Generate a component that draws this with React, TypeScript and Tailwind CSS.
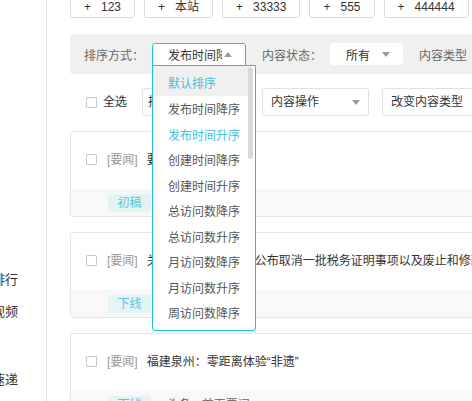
import React from "react";

const sortOptions = [
  "默认排序",
  "发布时间降序",
  "发布时间升序",
  "创建时间降序",
  "创建时间升序",
  "总访问数降序",
  "总访问数升序",
  "月访问数降序",
  "月访问数升序",
  "周访问数降序",
];

const sites = ["123", "本站", "33333", "555", "444444"];

type Card = { title: string; tag: string; extra?: string };

const cards: Card[] = [
  { title: "要闻标题测试", tag: "初稿" },
  {
    title: "关于《国家税务总局公布取消一批税务证明事项以及废止和修改部分规章规范性文件的决定》",
    tag: "下线",
  },
  { title: "福建泉州：零距离体验“非遗”", tag: "下线", extra: "头条 - 首页要闻" },
];

const Checkbox: React.FC = () => (
  <span className="inline-block w-[11px] h-[11px] shrink-0 border border-[#c8c8c8] rounded-[1px] bg-white" />
);

const DownArrow: React.FC = () => (
  <span className="inline-block w-0 h-0 border-x-[4px] border-x-transparent border-t-[5px] border-t-[#999]" />
);

const UpArrow: React.FC = () => (
  <span className="inline-block w-0 h-0 border-x-[4px] border-x-transparent border-b-[5px] border-b-[#999]" />
);

const App: React.FC = () => {
  return (
    <div className="w-[472px] h-[401px] overflow-hidden flex bg-white text-[12px] text-[#333] font-['Liberation_Sans','Noto_Sans_CJK_SC',sans-serif]">
      {/* side menu, cut off on the left */}
      <aside className="w-[47px] shrink-0 border-r border-[#e6e6e6] overflow-hidden flex flex-col items-end pr-[28px] pt-[264px] text-[13px] text-[#333]">
        <div className="h-[32px] flex items-center whitespace-nowrap">热门排行</div>
        <div className="h-[32px] flex items-center whitespace-nowrap">精选视频</div>
        <div className="h-[32px] mt-[36px] flex items-center whitespace-nowrap">新闻速递</div>
      </aside>

      <main className="flex-1 min-w-0">
        <div className="w-[600px] pl-[23px]">
          {/* site buttons */}
          <div className="flex gap-[9px] -mt-[5px]">
            {sites.map((s) => (
              <button
                key={s}
                className="h-[23px] px-[13px] flex items-center gap-[10px] border border-[#dcdcdc] rounded-[3px] bg-white text-[12px] text-[#333]"
              >
                <span>+</span>
                <span>{s}</span>
              </button>
            ))}
          </div>

          {/* filter bar */}
          <div className="mt-[16px] h-[40px] bg-[#f0f0f0] rounded-[3px] flex items-center pl-[14px]">
            <span className="w-[60px] pt-[4px] text-[#666]">排序方式：</span>
            <div className="relative ml-[8px]">
              <div className="w-[94px] h-[23px] border border-[#23c0d9] rounded-t-[3px] bg-white flex items-center pl-[15px]">
                <span className="w-[54px] pt-[4px] overflow-hidden whitespace-nowrap text-[#333]">发布时间降序</span>
                <span className="ml-[2px] flex items-center">
                  <UpArrow />
                </span>
              </div>
              <div className="absolute left-0 top-[22px] z-10 w-[104px] h-[266px] border border-[#23c0d9] rounded-b-[3px] bg-white overflow-hidden">
                <div className="absolute right-[2px] top-[1px] w-[5px] h-[92px] rounded-[3px] bg-[#d9d9d9]" />
                {sortOptions.map((o, i) => (
                  <div
                    key={o}
                    className={
                      i === 0
                        ? "h-[30px] pt-[6px] flex items-center pl-[15px] bg-[#f0f0f0] text-[#3fc1d8] mr-[6px]"
                        : i === 2
                        ? "h-[25.5px] pt-[4px] flex items-center pl-[15px] text-[#3fc1d8]"
                        : "h-[25.5px] pt-[4px] flex items-center pl-[15px] text-[#555]"
                    }
                  >
                    {o}
                  </div>
                ))}
              </div>
            </div>
            <span className="ml-[16px] w-[60px] pt-[4px] text-[#666]">内容状态：</span>
            <div className="ml-[8px] w-[73px] h-[22px] bg-white rounded-[3px] flex items-center pl-[16px]">
              <span className="pt-[4px]">所有</span>
              <span className="ml-[12px] flex items-center">
                <DownArrow />
              </span>
            </div>
            <span className="ml-[16px] pt-[4px] text-[#666]">内容类型</span>
          </div>

          {/* action row */}
          <div className="mt-[14px] h-[28px] flex items-center pl-[16px]">
            <Checkbox />
            <span className="ml-[6px]">全选</span>
            <div className="ml-[15px] w-[107px] h-[28px] border border-[#e0e0e0] rounded-[3px] flex items-center pl-[5px]">
              批量操作
            </div>
            <div className="ml-[13px] w-[107px] h-[28px] border border-[#e0e0e0] rounded-[3px] flex items-center pl-[8px] pr-[8px] justify-between">
              <span>内容操作</span>
              <DownArrow />
            </div>
            <div className="ml-[13px] w-[120px] h-[28px] border border-[#e0e0e0] rounded-[3px] flex items-center pl-[8px]">
              改变内容类型
            </div>
          </div>

          {/* content cards */}
          <div className="mt-[15px] flex flex-col gap-[15px]">
            {cards.map((c, i) => (
              <div key={i} className="border border-[#e6e6e6] rounded-[3px] bg-white">
                <div className="h-[57px] flex items-center pl-[15px] pb-[2px]">
                  <Checkbox />
                  <span className="ml-[10px] text-[#999]">[要闻]</span>
                  <span className="ml-[9px] whitespace-nowrap text-[#333]">{c.title}</span>
                </div>
                <div className="h-[27px] bg-[#f8f8f8] flex items-center pl-[37px]">
                  <span className="h-[18px] px-[9.5px] flex items-center rounded-[3px] bg-[#e3f4f6] text-[#5cc4d6]">
                    {c.tag}
                  </span>
                  {c.extra && <span className="ml-[16px] text-[#666]">{c.extra}</span>}
                </div>
              </div>
            ))}
          </div>
        </div>
      </main>
    </div>
  );
};

export default App;
